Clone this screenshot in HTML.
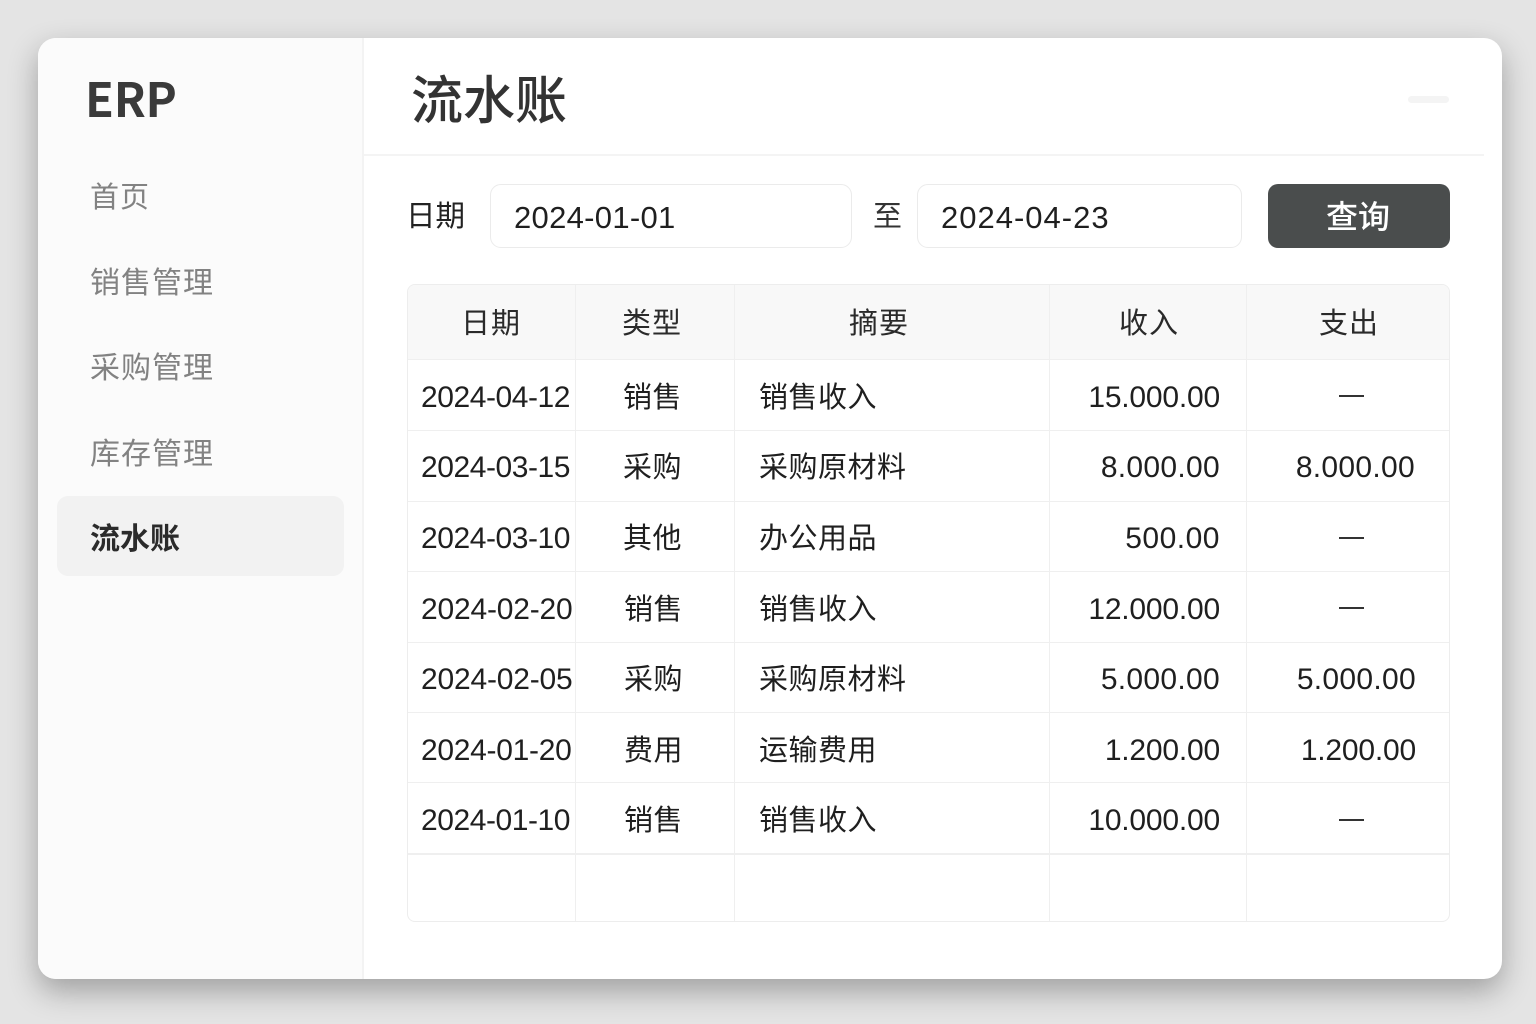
<!DOCTYPE html>
<html lang="zh">
<head>
<meta charset="utf-8">
<title>流水账</title>
<style>
html,body{margin:0;padding:0;width:1536px;height:1024px;overflow:hidden;background:#e4e4e4;font-family:"Liberation Sans","Noto Sans CJK SC",sans-serif;color:#1f1f1f}
.card{position:absolute;left:38px;top:38px;width:1464px;height:941px;background:#fff;border-radius:18px;box-shadow:0 12px 30px rgba(0,0,0,.3)}
.side{position:absolute;left:38px;top:38px;width:324px;height:941px;background:#fbfbfb;border-radius:18px 0 0 18px;border-right:2px solid #f3f3f3;box-sizing:content-box}
.t{position:absolute;white-space:nowrap;line-height:40px;height:40px;transform:translateY(-18px)}
.nav{font-size:30px;color:#828282;letter-spacing:1px;font-weight:400;transform:translateY(-18px)}
.hd{font-size:29px;color:#2a2a2a;letter-spacing:1px}
.d{font-size:30px;letter-spacing:-.45px}
.c{font-size:29px;letter-spacing:.5px}
.r{font-size:30px;letter-spacing:-.2px;text-align:right}
.w{letter-spacing:.3px}
.dash{position:absolute;width:25px;height:2px;background:#333}
.input{position:absolute;top:184px;height:62px;background:#fff;border:1.5px solid #ebebeb;border-radius:11px}
.tbl{position:absolute;left:407px;top:284px;width:1041px;height:636px;border:1.5px solid #ededed;border-radius:8px;overflow:hidden;background:#fff}
.th{position:absolute;left:0;top:0;width:100%;height:74px;background:#f8f8f8}
.h{position:absolute;left:0;width:100%;height:1px;background:#efefef}
.v{position:absolute;top:0;height:100%;width:1px;background:#efefef}
</style>
</head>
<body>
<div class="card"></div>
<div class="side"></div>

<div class="t" style="left:85px;top:95px;font-size:47px;font-weight:700;color:#3a3a3a;font-family:'Noto Sans CJK SC',sans-serif;letter-spacing:-.2px">ERP</div>
<div class="t nav" style="left:90px;top:196px;font-size:29px">首页</div>
<div class="t nav" style="left:90px;top:282px">销售管理</div>
<div class="t nav" style="left:90px;top:367px">采购管理</div>
<div class="t nav" style="left:90px;top:453px">库存管理</div>
<div style="position:absolute;left:57px;top:496px;width:287px;height:80px;background:#f2f2f2;border-radius:11px"></div>
<div class="t" style="left:90px;top:538px;font-size:30px;font-weight:700;color:#2b2b2b">流水账</div>

<div class="t" style="left:411px;top:102px;font-size:52px;font-weight:500;color:#333;line-height:60px;height:60px;transform:translateY(-30px)">流水账</div>
<div style="position:absolute;left:1408px;top:96px;width:41px;height:7px;background:#f4f4f4;border-radius:4px"></div>
<div style="position:absolute;left:364px;top:154px;width:1120px;height:2px;background:#f4f4f4"></div>

<div class="t" style="left:406px;top:215px;font-size:29.5px;color:#222">日期</div>
<div class="input" style="left:490px;width:360px"></div>
<div class="t d" style="left:514px;top:216px;font-size:31px;letter-spacing:.3px">2024-01-01</div>
<div class="t" style="left:873px;top:215px;font-size:29px;color:#333">至</div>
<div class="input" style="left:917px;width:323px"></div>
<div class="t d" style="left:941px;top:216px;font-size:31px;letter-spacing:1px">2024-04-23</div>
<div style="position:absolute;left:1268px;top:184px;width:182px;height:64px;background:#4a4d4d;border-radius:10px"></div>
<div class="t" style="left:1326px;top:215px;font-size:32px;color:#fff;font-weight:500">查询</div>

<div class="tbl">
<div class="th"></div>
<div class="h" style="top:74px"></div>
<div class="h" style="top:145px"></div>
<div class="h" style="top:216px"></div>
<div class="h" style="top:286px"></div>
<div class="h" style="top:357px"></div>
<div class="h" style="top:427px"></div>
<div class="h" style="top:497px"></div>
<div class="h" style="top:568px;height:2px"></div>
<div class="v" style="left:167px"></div>
<div class="v" style="left:326px"></div>
<div class="v" style="left:641px"></div>
<div class="v" style="left:838px"></div>
</div>

<div class="t hd" style="left:461px;top:322px">日期</div>
<div class="t hd" style="left:622px;top:322px">类型</div>
<div class="t hd" style="left:849px;top:322px">摘要</div>
<div class="t hd" style="left:1119px;top:322px">收入</div>
<div class="t hd" style="left:1319px;top:322px">支出</div>

<div class="t d" style="left:421px;top:396px">2024-04-12</div>
<div class="t c" style="left:623px;top:396px">销售</div>
<div class="t c" style="left:759px;top:396px">销售收入</div>
<div class="t r" style="right:316px;top:396px">15.000.00</div>
<div class="dash" style="left:1339px;top:395px"></div>

<div class="t d" style="left:421px;top:466px">2024-03-15</div>
<div class="t c" style="left:623px;top:466px">采购</div>
<div class="t c" style="left:759px;top:466px">采购原材料</div>
<div class="t r w" style="right:316px;top:466px">8.000.00</div>
<div class="t r w" style="right:121px;top:466px">8.000.00</div>

<div class="t d" style="left:421px;top:537px">2024-03-10</div>
<div class="t c" style="left:623px;top:537px">其他</div>
<div class="t c" style="left:759px;top:537px">办公用品</div>
<div class="t r" style="right:316px;top:537px;letter-spacing:.5px">500.00</div>
<div class="dash" style="left:1339px;top:537px"></div>

<div class="t d" style="left:421px;top:608px;letter-spacing:-.2px">2024-02-20</div>
<div class="t c" style="left:624px;top:608px">销售</div>
<div class="t c" style="left:759px;top:608px">销售收入</div>
<div class="t r" style="right:316px;top:608px">12.000.00</div>
<div class="dash" style="left:1339px;top:607px"></div>

<div class="t d" style="left:421px;top:678px;letter-spacing:-.2px">2024-02-05</div>
<div class="t c" style="left:624px;top:678px">采购</div>
<div class="t c" style="left:759px;top:678px">采购原材料</div>
<div class="t r w" style="right:316px;top:678px">5.000.00</div>
<div class="t r w" style="right:120px;top:678px">5.000.00</div>

<div class="t d" style="left:421px;top:749px;letter-spacing:-.3px">2024-01-20</div>
<div class="t c" style="left:624px;top:749px">费用</div>
<div class="t c" style="left:759px;top:749px">运输费用</div>
<div class="t r" style="right:316px;top:749px">1.200.00</div>
<div class="t r" style="right:120px;top:749px">1.200.00</div>

<div class="t d" style="left:421px;top:819px">2024-01-10</div>
<div class="t c" style="left:624px;top:819px">销售</div>
<div class="t c" style="left:759px;top:819px">销售收入</div>
<div class="t r" style="right:316px;top:819px">10.000.00</div>
<div class="dash" style="left:1339px;top:819px"></div>
</body>
</html>
